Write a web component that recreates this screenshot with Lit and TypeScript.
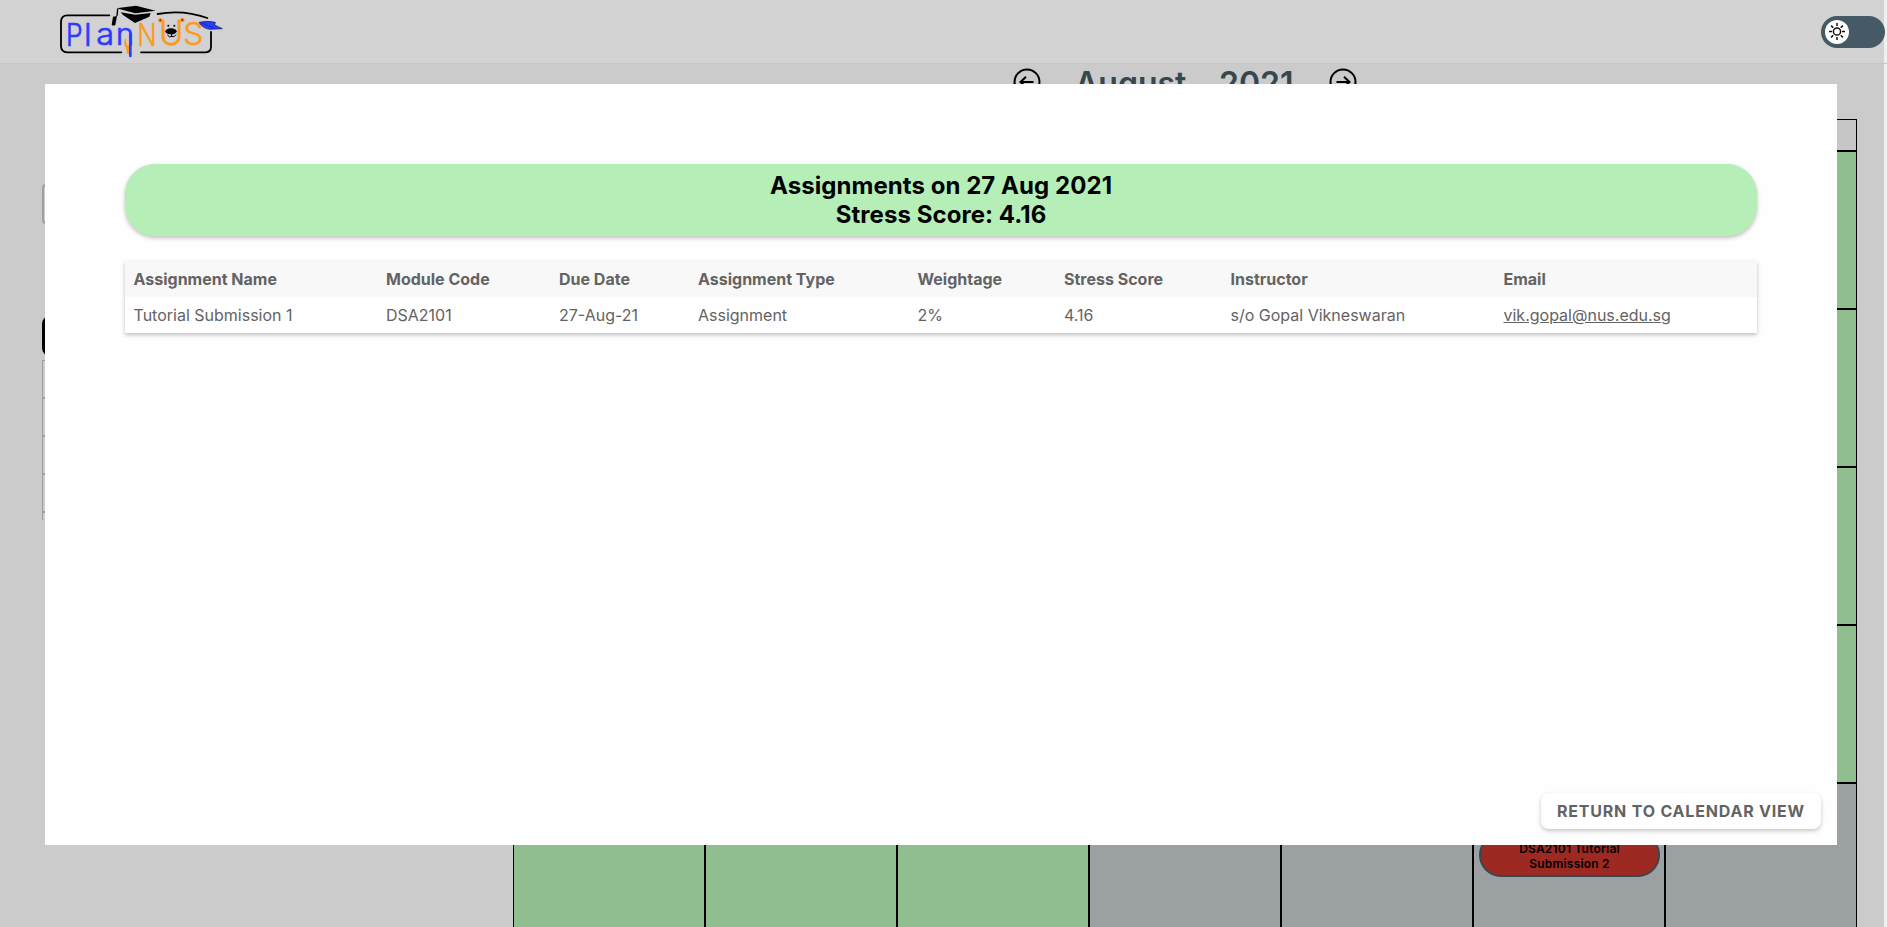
import { LitElement, html, css, svg } from "lit";
import { customElement } from "lit/decorators.js";
import { classMap } from "lit/directives/class-map.js";

const COLUMNS = [
  "Assignment Name", "Module Code", "Due Date", "Assignment Type",
  "Weightage", "Stress Score", "Instructor", "Email",
];

const ROW = [
  "Tutorial Submission 1", "DSA2101", "27-Aug-21", "Assignment",
  "2%", "4.16", "s/o Gopal Vikneswaran", "vik.gopal@nus.edu.sg",
];

@customElement("plan-logo")
class PlanLogo extends LitElement {
  static styles = css`
    :host { display: block; width: 200px; height: 63px; }
    .logo { display: block; overflow: visible; }
    .word { font: 300 92px "Inter", sans-serif; }
    .blue { fill: #2a3cff; stroke: #2a3cff; stroke-width: 2.2; }
    .orange { fill: #fb9a1e; stroke: #fb9a1e; stroke-width: 1.4; }
    .frame { fill: none; stroke: #000; stroke-width: 5.5; stroke-linecap: round; }
  `;
  render() {
    return html`
      <svg class="logo" width="200" height="63" viewBox="0 0 600 189">
        <path class="frame" d="M208 46H82Q63 46 63 66V138Q63 157 82 157H244M303 157H494Q513 157 513 140V96M353 42Q430 28 502 54"/>
        <g class="word blue">
          <text transform="translate(78 138) scale(.86 1)">P</text>
          <text x="133" y="138">l</text>
          <text transform="translate(169 136) scale(1.06 1)">a</text>
          <text x="228" y="136">n</text>
        </g>
        <path d="M259 112Q247 128 257 142L262 161L271 165V122L264 139Q257 130 259 112Z" fill="#fb9a1e"/>
        <path d="M271 102V168" stroke="#2a3cff" stroke-width="8" stroke-linecap="round"/>
        <g class="word orange">
          <text transform="translate(292 137) scale(.83 1)">N</text>
          <text transform="translate(357 136) scale(1.08 1.1)">U</text>
          <text transform="translate(430 136) scale(1.04 1)">S</text>
        </g>
        <circle cx="361" cy="61" r="5" fill="#5b3815" stroke="#fb9a1e" stroke-width="4"/>
        <circle cx="427" cy="60" r="5" fill="#5b3815" stroke="#fb9a1e" stroke-width="4"/>
        <circle cx="385" cy="77" r="3"/><circle cx="403" cy="77" r="3"/>
        <ellipse cx="393" cy="94" rx="17" ry="9"/>
        <path d="M395 100V111M382 105Q388 114 395 109Q402 114 408 104" fill="none" stroke="#000" stroke-width="3"/>
        <path d="M229 25L288 17L347 32L286 40ZM242 37L286 44L332 39L328 50L285 69L249 45Z"/>
        <path d="M233 27L231 48" stroke="#000" stroke-width="4"/>
        <path d="M219 50L231 48L226 75Q219 79 215 74Z"/>
        <path d="M477 67Q504 61 526 67L524 75L547 86L510 88Q488 86 477 67Z" fill="#2a3cff" stroke="#101642" stroke-width="2"/>
        <path d="M484 69L522 84" stroke="#17209b" stroke-width="2"/>
      </svg>`;
  }
}

@customElement("calendar-grid")
class CalendarGrid extends LitElement {
  static styles = css`
    :host { display: block; width: 1344px; }
    .grid {
      display: grid; grid-template-columns: repeat(7, 192px);
      grid-template-rows: 32px repeat(5, 158px);
    }
    .cell { box-sizing: border-box; border: 1px solid #000; background: #91be91; padding: 49px 4px 0 5px; }
    .head { background: #c6c6c6; padding: 0; }
    .other { background: #9ba0a2; }
    .event {
      box-sizing: border-box; width: 181px; height: 44px; border: 2px solid #38474e;
      border-radius: 22px; background: #9d2923; color: #000; text-align: center;
      font: 600 12px/15px "Inter", sans-serif; letter-spacing: .2px; padding: 6px 26px 4px;
    }
  `;
  render() {
    const days = Array.from({ length: 35 }, (_, i) => i);
    return html`<div class="grid">
      ${Array.from({ length: 7 }, () => html`<div class="cell head"></div>`)}
      ${days.map((i) => html`<div class=${classMap({ cell: true, other: i > 30 })}>
        ${i === 33 ? html`<div class="event">DSA2101 Tutorial Submission 2</div>` : ""}
      </div>`)}
    </div>`;
  }
}

@customElement("assignment-dialog")
class AssignmentDialog extends LitElement {
  static styles = css`
    :host {
      box-sizing: border-box; display: flex; flex-direction: column;
      width: 1792px; height: 761px; padding: 80px 80px 16px; background: #fefefe;
      font-family: "Inter", sans-serif;
    }
    .banner {
      box-sizing: border-box; height: 72px; padding-top: 7px; border-radius: 30px;
      background: #b5eeb7; color: #000; text-align: center; font-size: 24px; font-weight: 680;
      line-height: 29px; letter-spacing: .06px; box-shadow: 0 2px 4px rgba(0, 0, 0, .25);
    }
    .table {
      display: grid; grid-template-columns: 252.5px 173px 139px 219.5px 146.5px 166.5px 273px 262px;
      margin-top: 25px; background: #fff; color: #636363; font-size: 16px; line-height: 36px;
      box-shadow: 0 2px 4px rgba(0, 0, 0, .25);
    }
    .th, .td { height: 36px; padding-left: 8.5px; white-space: nowrap; }
    .th { background: #f8f8f8; font-weight: 700; }
    .td { font-weight: 375; }
    .mail { color: inherit; text-decoration: underline; }
    .back {
      margin: auto -64px 0 auto; width: 280px; height: 36px; padding: 0; border: 0; border-radius: 8px;
      background: #fff; color: #636363; font: 700 16px/36px "Inter", sans-serif;
      letter-spacing: .8px; white-space: nowrap; box-shadow: 0 2px 4px rgba(0, 0, 0, .22);
    }
  `;
  render() {
    return html`
      <div class="banner"><div>Assignments on 27 Aug 2021</div><div>Stress Score: 4.16</div></div>
      <div class="table">
        ${COLUMNS.map((c) => html`<div class="th">${c}</div>`)}
        ${ROW.map((v) => html`<div class="td">${v.includes("@") ? html`<a class="mail" href="mailto:${v}">${v}</a>` : v}</div>`)}
      </div>
      <button class="back">RETURN TO CALENDAR VIEW</button>`;
  }
}

@customElement("app-root")
class AppRoot extends LitElement {
  static styles = css`
    :host {
      display: block; position: relative; width: 1887px; height: 927px; overflow: hidden;
      background: linear-gradient(to right, #cbcbcb 1884px, #f0f0f0 1884px);
      font-family: "Inter", sans-serif;
    }
    .bar {
      box-sizing: border-box; height: 64px; padding: 0 2px 0 40px; border-bottom: 1px solid #c5c8c9;
      display: flex; align-items: flex-start; justify-content: space-between;
      background: linear-gradient(to right, #d2d2d2 1884px, #f0f0f0 1884px);
    }
    .switch {
      box-sizing: border-box; width: 64px; height: 32px; margin-top: 16px; padding: 4px;
      border-radius: 16px; background: #455a64;
    }
    .knob { display: block; width: 24px; height: 24px; border-radius: 12px; background: #fff; }
    .main { display: flex; padding-left: 42px; }
    .side { width: 471px; flex: none; padding-top: 120px; }
    .field { box-sizing: border-box; width: 400px; height: 40px; border: 2px solid #9ba0a2; border-radius: 4px; }
    .action { width: 400px; height: 40px; margin-top: 92px; border-radius: 8px; background: #000; }
    .list { box-sizing: border-box; width: 400px; height: 160px; margin-top: 4px; border: 1px solid #9ba0a2; border-bottom: 0; overflow: hidden; }
    .item { box-sizing: border-box; height: 38px; border-bottom: 2px solid #9ba0a2; }
    .cal { width: 1344px; flex: none; }
    .month { display: flex; height: 55px; padding-left: 499px; color: #37474f; font-size: 32px; font-weight: 600; line-height: 39px; }
    .arrow { display: block; width: 30px; height: 30px; margin-top: 3px; }
    .name { width: 144px; margin-left: 33px; }
    .year { width: 109px; }
    .overlay { position: absolute; left: 45px; top: 84px; }
  `;
  arrow(right: boolean) {
    return html`<svg class="arrow" viewBox="0 0 30 30" fill="none" stroke="#000" stroke-width="2">
      <circle cx="15" cy="15" r="12.5"/>
      ${right ? svg`<path d="M8.5 15H21.5M16 9.8L21.5 15L16 20.2"/>` : svg`<path d="M21.5 15H8.5M14 9.8L8.5 15L14 20.2"/>`}
    </svg>`;
  }
  render() {
    return html`
      <div class="bar">
        <plan-logo></plan-logo>
        <div class="switch">
          <svg class="knob" viewBox="0 0 24 24" fill="none" stroke="#111" stroke-width="1.5">
            <circle cx="12" cy="11.5" r="3.6"/>
            <path d="M12 3V6M12 17V20M4 11.5H7M17 11.5H20M6.1 5.6L8.2 7.7M15.8 15.3L17.9 17.4M6.1 17.4L8.2 15.3M15.8 7.7L17.9 5.6"/>
          </svg>
        </div>
      </div>
      <div class="main">
        <div class="side">
          <div class="field"></div>
          <div class="action"></div>
          <div class="list">${[0, 1, 2, 3].map(() => html`<div class="item"></div>`)}</div>
        </div>
        <div class="cal">
          <div class="month">
            ${this.arrow(false)}<span class="name">August</span><span class="year">2021</span>${this.arrow(true)}
          </div>
          <calendar-grid></calendar-grid>
        </div>
      </div>
      <assignment-dialog class="overlay"></assignment-dialog>`;
  }
}
